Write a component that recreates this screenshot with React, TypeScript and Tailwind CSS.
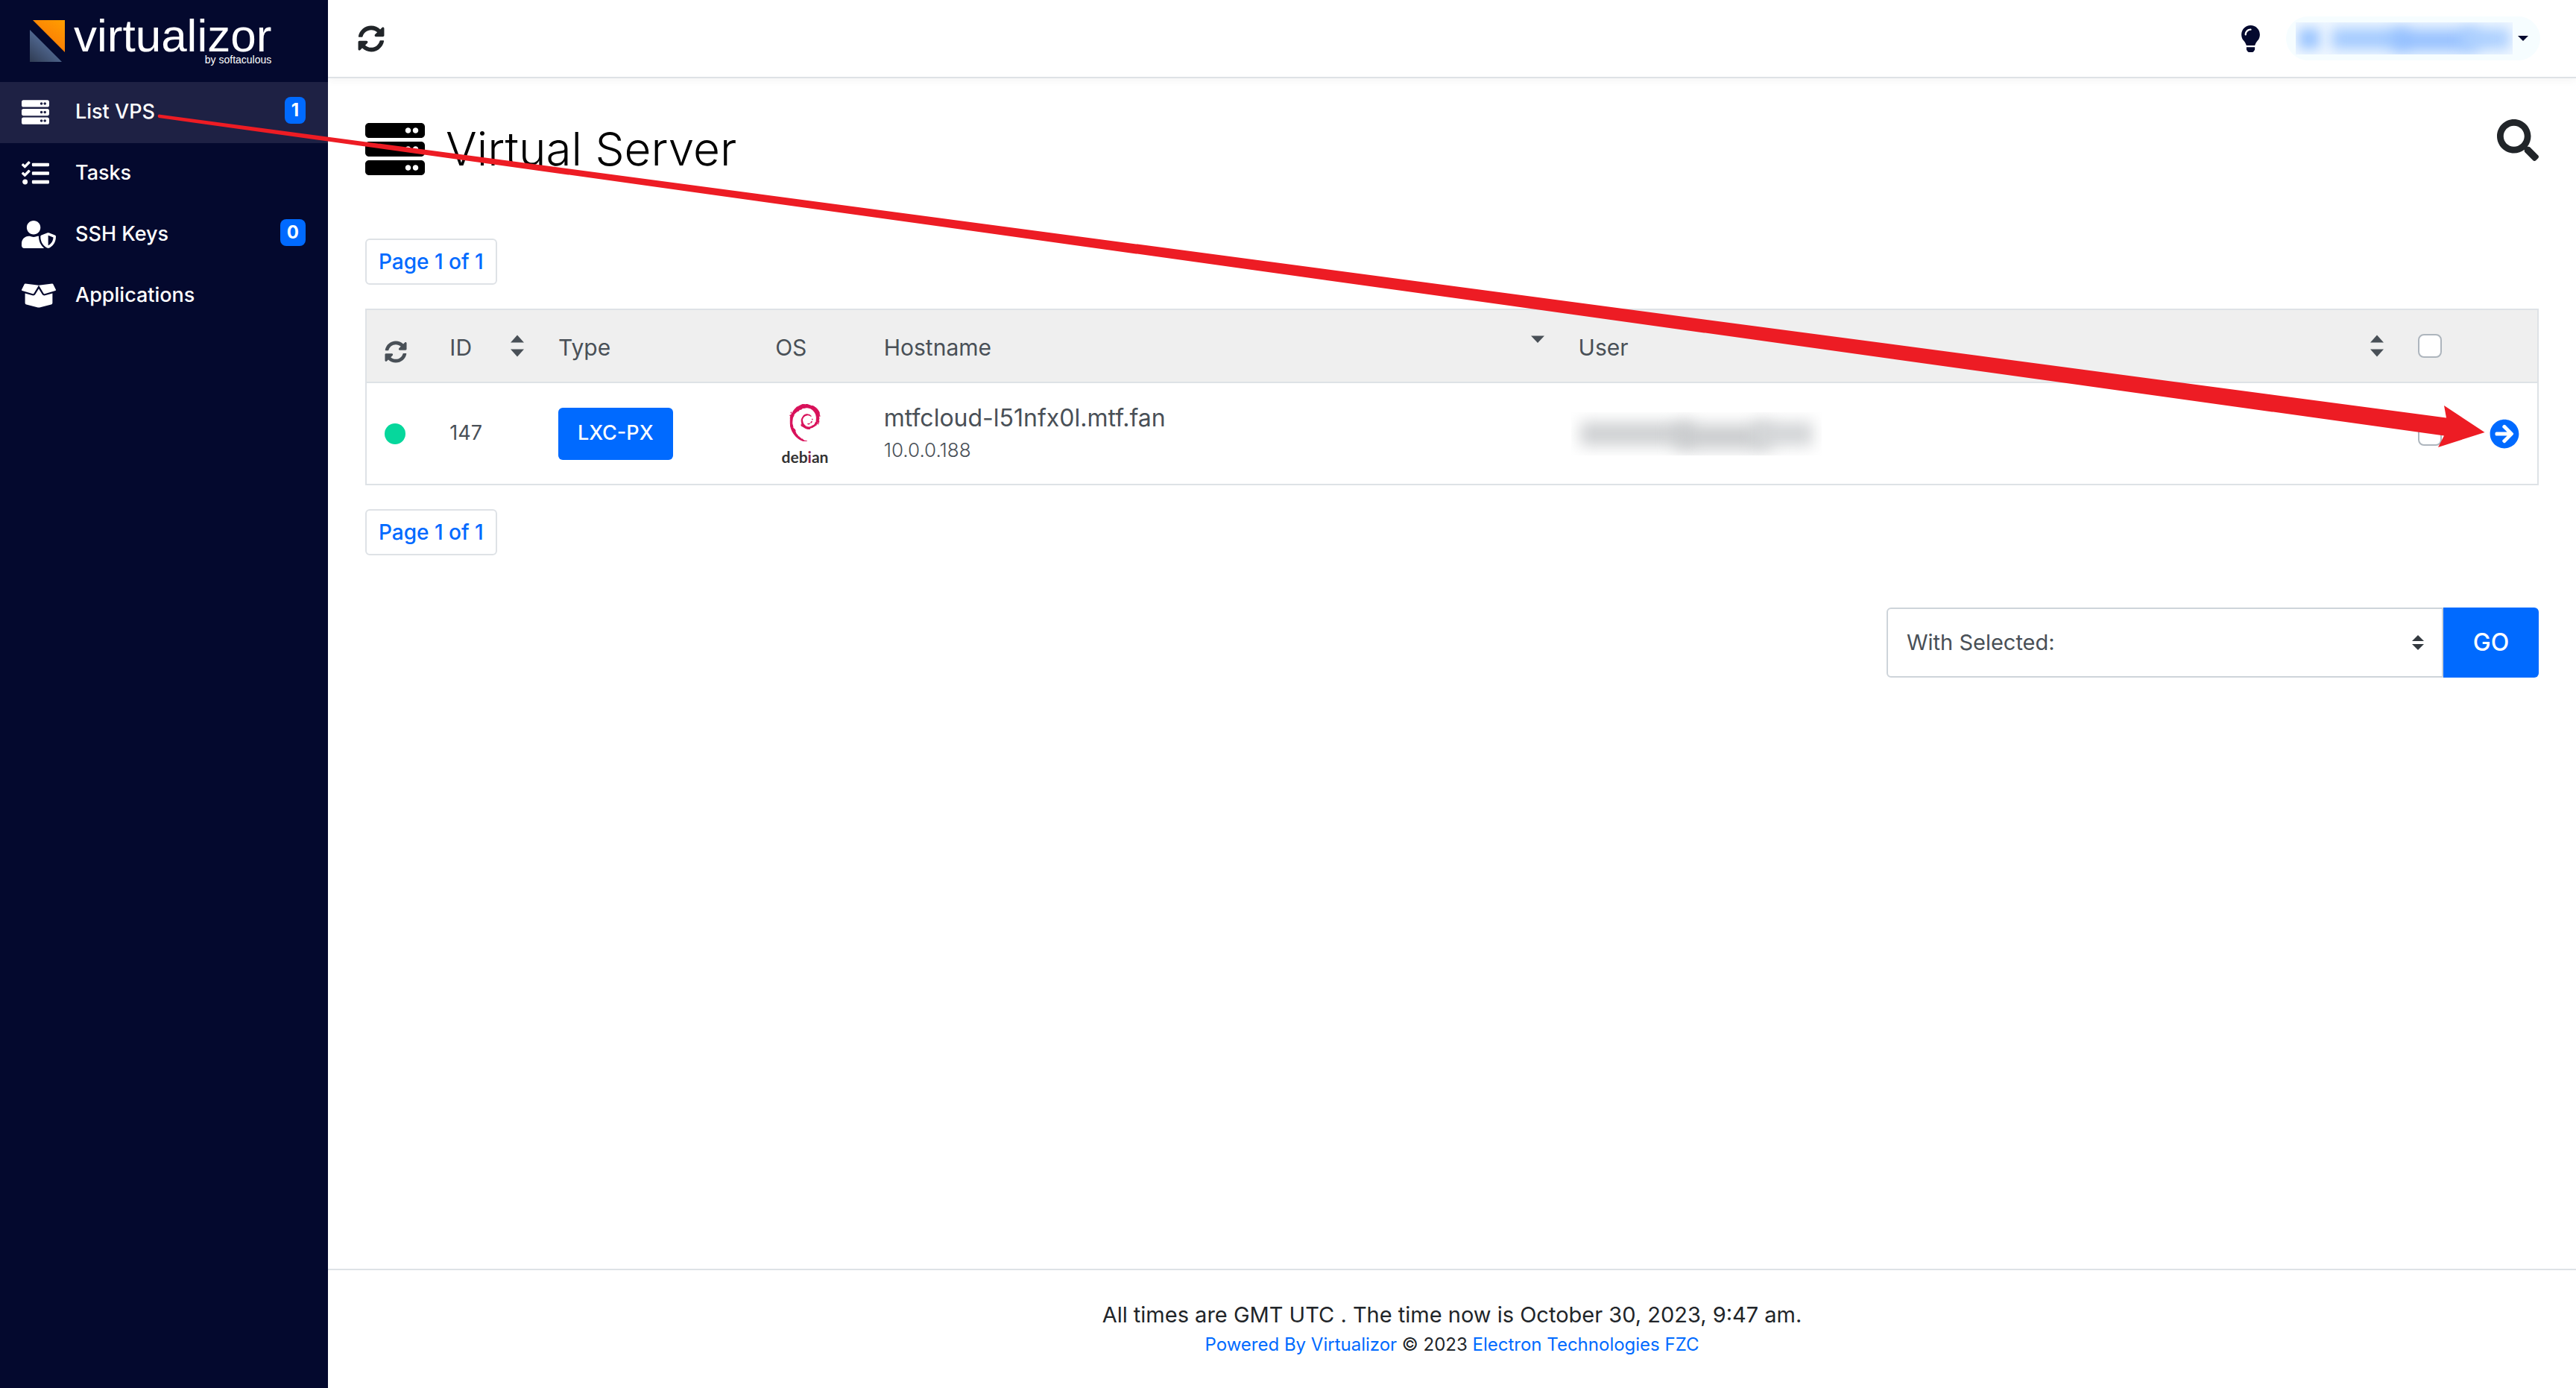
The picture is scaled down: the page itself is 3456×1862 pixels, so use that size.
import type { ReactNode } from 'react';
import {
  FaArrowCircleRight,
  FaBoxOpen,
  FaLightbulb,
  FaSearch,
  FaServer,
  FaSyncAlt,
  FaTasks,
  FaUserShield,
} from 'react-icons/fa';
import { SiDebian } from 'react-icons/si';

const menu = [
  { label: 'List VPS', icon: FaServer, size: 'w-[37px]', badge: '1', active: true },
  { label: 'Tasks', icon: FaTasks, size: 'w-[37px]' },
  { label: 'SSH Keys', icon: FaUserShield, size: 'w-[46px]', badge: '0' },
  { label: 'Applications', icon: FaBoxOpen, size: 'w-[46px]' },
];

function Logo() {
  return (
    <a href="#" aria-label="virtualizor by softaculous" className="flex h-[110px] gap-3 pl-[39px] pt-[18px] text-white">
      <svg viewBox="0 0 48 56" className="mt-[9px] h-14 w-12 shrink-0" aria-hidden="true">
        <defs>
          <linearGradient id="logo-orange" x1="1" y1="0" x2="0.4" y2="0.8">
            <stop offset="0" stopColor="#ff9f00" />
            <stop offset="1" stopColor="#fb7a05" />
          </linearGradient>
          <linearGradient id="logo-blue" x1="0" y1="1" x2="0.6" y2="0.3">
            <stop offset="0" stopColor="#2f3b52" />
            <stop offset="1" stopColor="#566f9b" />
          </linearGradient>
        </defs>
        <path d="M5 0H48V43Z" fill="url(#logo-orange)" />
        <path d="M1 13V56H44Z" fill="url(#logo-blue)" />
      </svg>
      <span className="flex flex-col items-end font-['Liberation_Sans',sans-serif]">
        <span className="text-[62px] leading-[60px]">virtualizor</span>
        <span className="text-sm leading-1">by softaculous</span>
      </span>
    </a>
  );
}

function Sidebar() {
  return (
    <aside className="w-[440px] shrink-0 bg-[#04092e] text-white">
      <Logo />
      <nav>
        {menu.map(({ label, icon: Icon, size, badge, active }) => (
          <a
            key={label}
            href="#"
            className={`flex h-[82px] items-center pb-0.5 pl-[29px] pr-[30px] text-[27px] font-medium ${active ? 'bg-[#1e2144]' : ''}`}
          >
            <span className="w-[72px]">
              <Icon className={`h-[37px] ${size}`} />
            </span>
            {label}
            {badge && (
              <span className="ml-auto mt-5 self-start rounded-lg bg-[#006aff] px-[9px] text-2xl leading-9 font-bold">{badge}</span>
            )}
          </a>
        ))}
      </nav>
    </aside>
  );
}

function TopBar() {
  return (
    <header className="flex h-[105px] items-center border-b-2 border-[#dee2e6] bg-white pl-10 pr-12 shadow-[0_4px_10px_rgba(0,0,0,0.04)]">
      <button type="button" aria-label="Refresh" className="text-[36px] text-[#212529]">
        <FaSyncAlt />
      </button>
      <button type="button" aria-label="Hints" className="ml-auto text-[36px] text-[#04092e]">
        <FaLightbulb className="w-[25px]" />
      </button>
      <button type="button" aria-label="Account menu" className="ml-[35px] flex h-[59px] items-center gap-[7px] rounded-full bg-[#f6fdff] pl-[13px] pr-4">
        <span className="flex h-[43px] w-[291px] items-center gap-4 overflow-hidden bg-[#f1f8ff] px-1" aria-hidden="true">
          <span className="h-7 w-7 bg-[#9cc6ff] blur-[8px]" />
          <span className="flex flex-1 items-center">
            <span className="h-7 flex-1 bg-[#a3caff] blur-[9px]" />
            <span className="-mx-5 mt-1 h-7 w-28 bg-[#90bdff] blur-[10px]" />
            <span className="h-7 w-16 bg-[#abcfff] blur-[9px]" />
          </span>
        </span>
        <svg viewBox="0 0 14 7" className="h-[7px] w-3.5 fill-[#04092e]" aria-hidden="true">
          <path d="M0 0H14L7 7Z" />
        </svg>
      </button>
    </header>
  );
}

function Pager() {
  return (
    <button type="button" className="block h-[62px] rounded-md border-2 border-[#dee2e6] bg-white px-4 text-[28px] font-medium text-[#006aff]">
      Page 1 of 1
    </button>
  );
}

function SortHead({ children, mode }: { children: ReactNode; mode: 'both' | 'desc' }) {
  return (
    <button type="button" className="flex w-full items-center justify-between">
      <span className="pt-1">{children}</span>
      <svg viewBox="0 0 18 30" className="h-[30px] w-[18px] fill-[#495057]" aria-hidden="true">
        {mode === 'both' ? <path d="M0 10.5 9 0.5 18 10.5ZM0 19.5 9 29.5 18 19.5Z" /> : <path d="M0 1.5 9 11 18 1.5Z" />}
      </svg>
    </button>
  );
}

function Check({ label }: { label: string }) {
  return (
    <input
      type="checkbox"
      aria-label={label}
      className="block size-8 appearance-none rounded-lg border-2 border-[#adb5bd] bg-white checked:bg-[#006aff]"
    />
  );
}

function DebianLogo() {
  return (
    <span className="ml-2 flex h-20 w-16 flex-col items-center" role="img" aria-label="debian">
      <SiDebian className="size-[50px] shrink-0 stroke-[#d8115a] stroke-[0.5] text-[#d8115a]" />
      <svg viewBox="0 0 64 30" className="h-[30px] w-16 shrink-0 overflow-visible" aria-hidden="true">
        <text x="32" y="29" textAnchor="middle" className="fill-[#333333] font-['Lato',sans-serif] text-[21px] font-bold">
          deb<tspan className="fill-[#8f2347]">i</tspan>an
        </text>
      </svg>
    </span>
  );
}

function ServerTable() {
  return (
    <div className="mt-8 border-2 border-[#dee2e6]">
      <table className="w-full table-fixed border-separate border-spacing-0 text-left text-[#495057]">
        <colgroup>
          <col className="w-[3%]" />
          <col className="w-[5%]" />
          <col className="w-[10%]" />
          <col className="w-[5%]" />
          <col className="w-[32%]" />
          <col />
          <col className="w-24" />
          <col className="w-[88px]" />
        </colgroup>
        <thead>
          <tr className="h-[98px] bg-[#efefef] text-[30px] [&>th]:border-b-2 [&>th]:border-[#dee2e6] [&>th]:font-normal">
            <th className="pl-6 pt-4">
              <button type="button" aria-label="Refresh status" className="block">
                <FaSyncAlt />
              </button>
            </th>
            <th className="pl-6 pr-[22px]">
              <SortHead mode="both">ID</SortHead>
            </th>
            <th className="px-6 pt-1">Type</th>
            <th className="px-6 pt-1">OS</th>
            <th className="pl-6 pr-[22px]">
              <SortHead mode="desc">Hostname</SortHead>
            </th>
            <th className="pl-6 pr-[22px]">
              <SortHead mode="both">User</SortHead>
            </th>
            <th className="px-6">
              <Check label="Select all servers" />
            </th>
            <th />
          </tr>
        </thead>
        <tbody>
          <tr className="h-[135px] bg-white">
            <td className="pl-6">
              <span className="block size-7 rounded-full bg-[#06d79c]" role="img" aria-label="Online" />
            </td>
            <td className="px-6 text-[27px]">147</td>
            <td className="px-6">
              <button type="button" className="h-[70px] rounded-md bg-[#006aff] px-[26px] text-[27px] font-medium text-white">
                LXC-PX
              </button>
            </td>
            <td>
              <div className="pl-6">
                <DebianLogo />
              </div>
            </td>
            <td className="px-6 leading-[43px]">
              <div className="text-[32px]">mtfcloud-l51nfx0l.mtf.fan</div>
              <div className="text-[26px] font-light">10.0.0.188</div>
            </td>
            <td className="px-3.5">
              <div className="flex h-[58px] w-[336px] items-center overflow-hidden px-3" aria-hidden="true">
                <span className="h-8 flex-1 bg-[#cfd1d3] blur-[10px]" />
                <span className="-mx-6 mt-2 h-8 w-32 bg-[#c8cacc] blur-[11px]" />
                <span className="h-8 w-20 bg-[#d3d5d7] blur-[10px]" />
              </div>
            </td>
            <td className="px-6">
              <Check label="Select server 147" />
            </td>
            <td className="pl-6">
              <a href="#" aria-label="Manage server 147" className="block text-[40px] text-[#006aff]">
                <FaArrowCircleRight />
              </a>
            </td>
          </tr>
        </tbody>
      </table>
    </div>
  );
}

function BulkActions() {
  return (
    <form className="mt-[70px] ml-auto flex h-[94px] w-[875px]" onSubmit={(e) => e.preventDefault()}>
      <div className="relative flex-1">
        <select
          aria-label="Bulk action"
          className="size-full appearance-none rounded-l-md border-2 border-[#ced4da] bg-white px-[25px] text-[29px] text-[#495057]"
        >
          <option>With Selected:</option>
        </select>
        <svg viewBox="0 0 16 20" className="pointer-events-none absolute top-[37px] right-[26px] h-5 w-4 fill-[#343a40]" aria-hidden="true">
          <path d="M0 8 8 0 16 8ZM0 12 8 20 16 12Z" />
        </svg>
      </div>
      <button type="submit" className="w-32 rounded-r-md bg-[#006aff] text-[32px] font-medium text-white">
        GO
      </button>
    </form>
  );
}

/* Annotation arrow leading from the menu entry to the manage link. */
function PointerArrow() {
  return (
    <svg
      viewBox="0 0 3456 1862"
      className="pointer-events-none absolute inset-x-0 top-0 w-full fill-[#ed1c24]"
      aria-hidden="true"
    >
      <path d="M213 153.5 3282 560.5 3279 544 3333.5 580 3271 600 3279 584.5 213 158Q210.5 155.5 213 153.5Z" />
    </svg>
  );
}

export default function App() {
  return (
    <div className="relative flex min-h-screen bg-white font-['Inter',sans-serif] text-[#212529]">
      <Sidebar />
      <div className="flex min-w-0 flex-1 flex-col">
        <TopBar />
        <main className="flex-1 px-[50px] pt-[55px]">
          <div className="mb-20 flex items-center gap-7 text-black">
            <FaServer className="size-20" />
            <h1 className="text-[62px] leading-[80px] font-light">Virtual Server</h1>
            <button type="button" aria-label="Search" className="ml-auto self-start text-[56px] text-[#212529]">
              <FaSearch />
            </button>
          </div>
          <Pager />
          <ServerTable />
          <div className="mt-8">
            <Pager />
          </div>
          <BulkActions />
        </main>
        <footer className="h-40 border-t-2 border-[#dee2e6] pt-[39px] text-center">
          <p className="text-[29px] leading-[42px]">All times are GMT UTC . The time now is October 30, 2023, 9:47 am.</p>
          <p className="text-2xl leading-[38px]">
            <a href="#" className="text-[#006aff]">Powered By Virtualizor</a> © 2023{' '}
            <a href="#" className="text-[#006aff]">Electron Technologies FZC</a>
          </p>
        </footer>
      </div>
      <PointerArrow />
    </div>
  );
}
